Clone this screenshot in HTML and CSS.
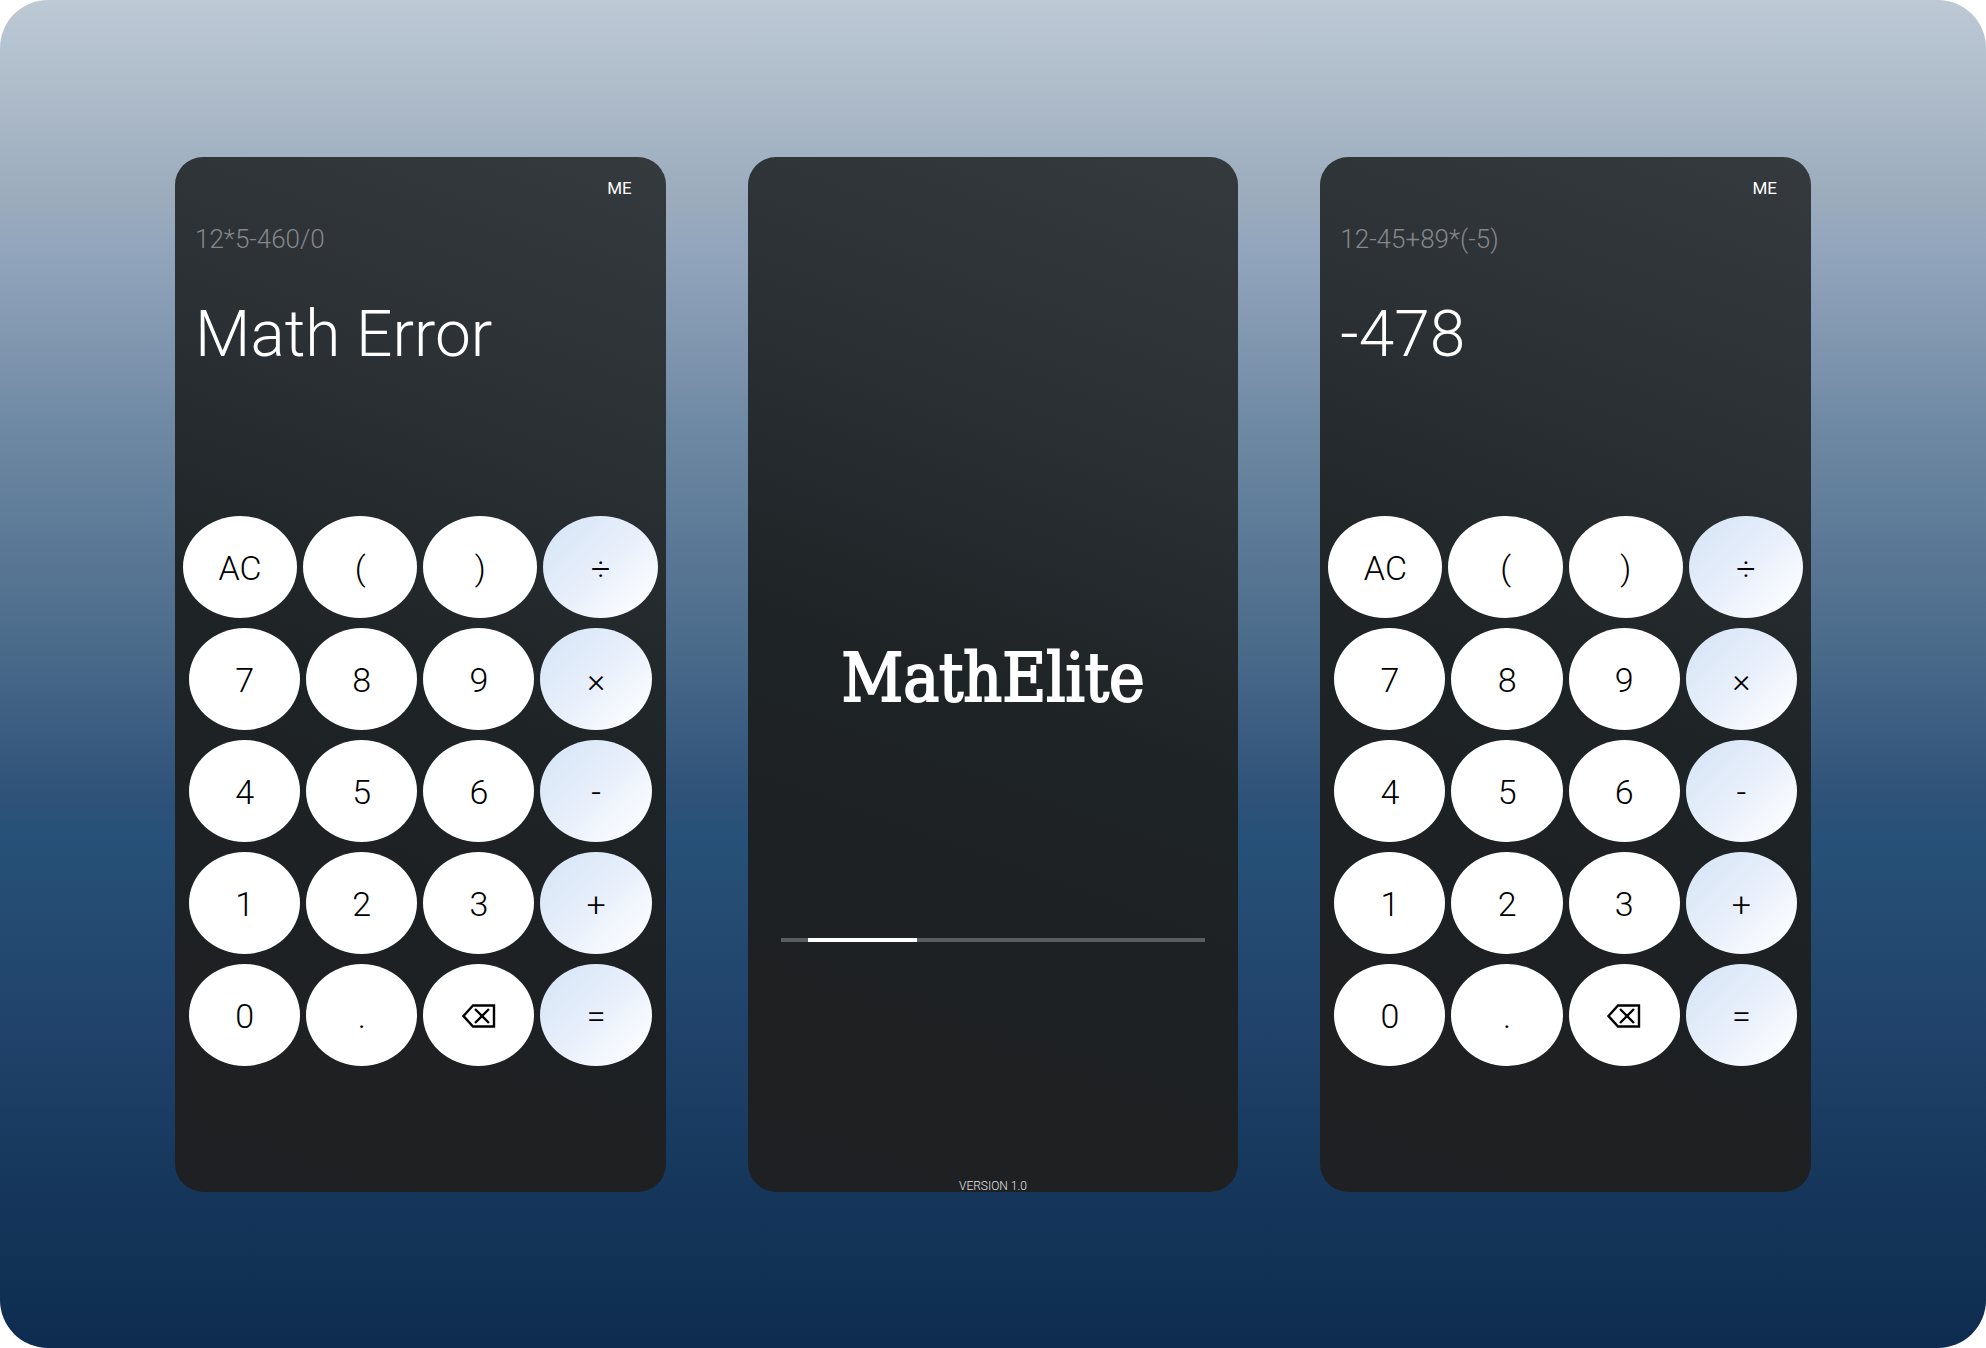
FILE: index.html
```html
<!DOCTYPE html>
<html lang="en">
<head>
<meta charset="utf-8">
<meta name="viewport" content="width=device-width, initial-scale=1">
<title>MathElite</title>
<link rel="stylesheet" href="styles.css">
</head>
<body>
<main class="stage">
  <section class="phone" aria-label="Calculator">
    <header class="brand">ME</header>
    <div class="display">
      <p class="expression">12*5-460/0</p>
      <output class="result">Math Error</output>
    </div>
    <div class="keypad">
      <div class="row row-wide"><button class="key">AC</button><button class="key">(</button><button class="key">)</button><button class="key op">÷</button></div>
      <div class="row"><button class="key">7</button><button class="key">8</button><button class="key">9</button><button class="key op">×</button></div>
      <div class="row"><button class="key">4</button><button class="key">5</button><button class="key">6</button><button class="key op">-</button></div>
      <div class="row"><button class="key">1</button><button class="key">2</button><button class="key">3</button><button class="key op">+</button></div>
      <div class="row"><button class="key">0</button><button class="key">.</button><button class="key" aria-label="Backspace"><svg class="icon" viewBox="0 0 34 24" aria-hidden="true"><path d="M1.500 12 11 1.500H32V22.500H11Z"/><path d="M13 5 27 19M27 5 13 19"/></svg></button><button class="key op">=</button></div>
    </div>
  </section>

  <section class="phone splash" aria-label="Loading">
    <h1 class="logo">MathElite</h1>
    <div class="progress" role="progressbar" aria-label="Loading"><div class="progress-bar"></div></div>
    <p class="version">VERSION 1.0</p>
  </section>

  <section class="phone" aria-label="Calculator">
    <header class="brand">ME</header>
    <div class="display">
      <p class="expression">12-45+89*(-5)</p>
      <output class="result">-478</output>
    </div>
    <div class="keypad">
      <div class="row row-wide"><button class="key">AC</button><button class="key">(</button><button class="key">)</button><button class="key op">÷</button></div>
      <div class="row"><button class="key">7</button><button class="key">8</button><button class="key">9</button><button class="key op">×</button></div>
      <div class="row"><button class="key">4</button><button class="key">5</button><button class="key">6</button><button class="key op">-</button></div>
      <div class="row"><button class="key">1</button><button class="key">2</button><button class="key">3</button><button class="key op">+</button></div>
      <div class="row"><button class="key">0</button><button class="key">.</button><button class="key" aria-label="Backspace"><svg class="icon" viewBox="0 0 34 24" aria-hidden="true"><path d="M1.500 12 11 1.500H32V22.500H11Z"/><path d="M13 5 27 19M27 5 13 19"/></svg></button><button class="key op">=</button></div>
    </div>
  </section>
</main>
</body>
</html>
```
FILE: styles.css
```css
* { box-sizing: border-box; }

body {
  margin: 0;
  background: #fff;
  font-family: Roboto, "Liberation Sans", sans-serif;
  font-weight: 300;
}

h1, p { margin: 0; font-weight: inherit; }

.stage {
  min-height: 100vh;
  padding: 157px 175px 156px;
  border-radius: 48px;
  display: grid;
  grid-template-columns: repeat(3, 1fr);
  gap: 82px;
  background: linear-gradient(#bdc9d5 0%, #9babbc 15%, #93a6bd 18%, #7a91ab 28%, #6f8aa4 31%, #4b6b8b 48%, #2f5279 59%, #275178 62%, #20426a 77%, #15365a 89%, #0d2c4f 100%);
}

.phone {
  display: flex;
  flex-direction: column;
  border-radius: 28px;
  overflow: hidden;
  color: #fff;
  background: linear-gradient(200deg, #343a3d 0%, #2b3034 26%, #1e2326 52%, #1d2124 72%, #1f2022 86%, #1f2023 100%);
}

.brand {
  padding: 18px 34px 0;
  text-align: right;
  font-size: 17px;
  line-height: 26px;
  font-weight: 400;
}

.display {
  display: flex;
  flex-direction: column;
  height: 315px;
  padding: 22px 20px 0;
}

.expression {
  font-size: 26px;
  line-height: 32px;
  color: #85878a;
}

.result {
  padding-top: 38px;
  font-size: 64px;
  line-height: 84px;
}

.keypad {
  display: flex;
  flex-direction: column;
  gap: 10px;
}

.row {
  display: grid;
  grid-template-columns: repeat(4, 1fr);
  gap: 6px;
  padding: 0 14px;
}

.row-wide { padding: 0 8px; }

.key {
  display: flex;
  align-items: center;
  justify-content: center;
  height: 102px;
  padding: 2px 0 0;
  border: 0;
  border-radius: 50%;
  background: #fff;
  color: #000;
  font: inherit;
  font-size: 34px;
}

.op { background: linear-gradient(135deg, #d8e6f7 10%, #e8effb 50%, #fcfdff 90%); }

.icon {
  width: 34px;
  height: 24px;
  fill: none;
  stroke: #000;
  stroke-width: 2.4;
}

.splash {
  padding: 480px 33px 0;
}

.logo {
  text-align: center;
  font-family: "DejaVu Serif Condensed", "DejaVu Serif", serif;
  font-size: 67px;
  line-height: 82px;
  -webkit-text-stroke: 2px #fff;
}

.progress {
  height: 4px;
  margin-top: 219px;
  padding-left: 27px;
  background: #5b5e60;
}

.progress-bar {
  width: 109px;
  height: 4px;
  background: #fff;
}

.version {
  margin-top: auto;
  text-align: center;
  font-size: 12px;
  line-height: 12px;
  color: #e4e5e6;
}
```
